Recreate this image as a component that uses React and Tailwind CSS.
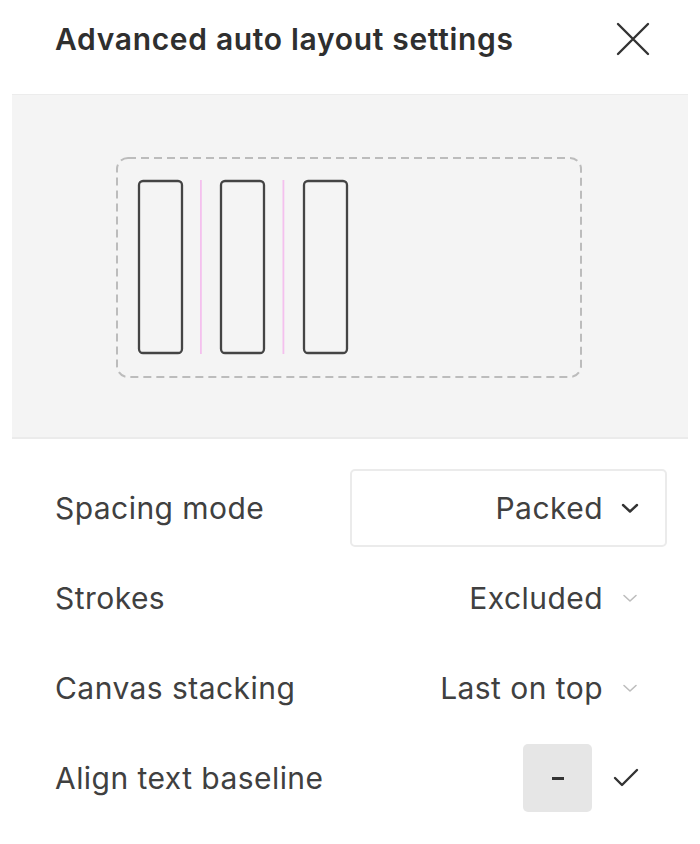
import React from "react";

function Chevron({ dark }) {
  return (
    <svg width="20" height="12" viewBox="0 0 20 12" className="shrink-0">
      <path
        d={dark ? "M3 3 L10 9.5 L17 3" : "M4 3.5 L10 9 L16 3.5"}
        fill="none"
        stroke={dark ? "#333333" : "#bdbdbd"}
        strokeWidth={dark ? 2.4 : 1.6}
        strokeLinecap="round"
        strokeLinejoin="round"
      />
    </svg>
  );
}

function Preview() {
  const bars = [22, 104, 187];
  return (
    <svg width="470" height="226" viewBox="0 0 470 226" className="block">
      <rect
        x="1"
        y="1"
        width="464"
        height="219"
        rx="11"
        fill="none"
        stroke="#bcbcbc"
        strokeWidth="2"
        strokeDasharray="8 5"
      />
      {bars.map((x) => (
        <rect
          key={x}
          x={x + 1}
          y="24"
          width="43"
          height="172"
          rx="4"
          fill="none"
          stroke="#444444"
          strokeWidth="2.3"
        />
      ))}
      <rect x="84" y="23" width="1.8" height="174" fill="#f4c0ee" />
      <rect x="166.5" y="23" width="1.8" height="174" fill="#f4c0ee" />
    </svg>
  );
}

function Row({ label, children }) {
  return (
    <div className="flex h-[90px] items-center justify-between pl-[55px] pr-[33px]">
      <span className="text-[30px] tracking-[0.45px] text-[#404040]">{label}</span>
      {children}
    </div>
  );
}

function SelectValue({ value, boxed }) {
  return (
    <div
      className={
        "flex h-[78px] w-[317px] items-center justify-end gap-[17px] rounded-[5px] border-2 pr-[25px] " +
        (boxed ? "border-[#ebebeb]" : "border-transparent")
      }
    >
      <span className="text-[30px] tracking-[0.45px] text-[#404040]">{value}</span>
      <Chevron dark={boxed} />
    </div>
  );
}

export default function App() {
  return (
    <div
      className="h-[844px] w-[700px] bg-white"
      style={{ fontFamily: "Inter, 'Noto Sans', sans-serif" }}
    >
      <div className="flex h-[94px] items-center justify-between pb-[16px] pl-[55px] pr-[50px]">
        <h1 className="text-[30px] font-semibold tracking-[0.68px] text-[#2f2f2f]">
          Advanced auto layout settings
        </h1>
        <svg width="34" height="34" viewBox="0 0 34 34">
          <path
            d="M2 2 L32 32 M32 2 L2 32"
            stroke="#333333"
            strokeWidth="2.4"
            strokeLinecap="round"
          />
        </svg>
      </div>
      <div className="mx-[12px] h-[345px] border-t border-b-2 border-t-[#ececec] border-b-[#ebebeb] bg-[#f4f4f4] pl-[104px] pt-[62px]">
        <Preview />
      </div>
      <div className="pt-[24px]">
        <Row label="Spacing mode">
          <SelectValue value="Packed" boxed />
        </Row>
        <Row label="Strokes">
          <SelectValue value="Excluded" />
        </Row>
        <Row label="Canvas stacking">
          <SelectValue value="Last on top" />
        </Row>
        <Row label="Align text baseline">
          <div className="flex items-center gap-[21px] pr-[28px]">
            <div className="flex h-[68px] w-[69px] items-center justify-center rounded-[5px] bg-[#e6e6e6]">
              <div className="h-[3px] w-[12px] bg-[#333333]" />
            </div>
            <svg width="26" height="20" viewBox="0 0 26 20">
              <path
                d="M2 10 L9 17 L24 2"
                fill="none"
                stroke="#333333"
                strokeWidth="2.4"
                strokeLinecap="round"
                strokeLinejoin="round"
              />
            </svg>
          </div>
        </Row>
      </div>
    </div>
  );
}
